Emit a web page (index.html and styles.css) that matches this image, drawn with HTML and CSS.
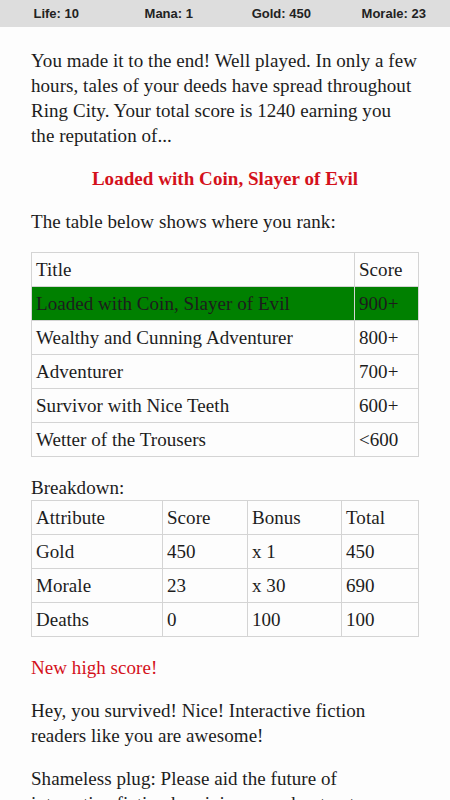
FILE: index.html
```html
<!DOCTYPE html>
<html>
<head>
<meta charset="utf-8">
<link rel="stylesheet" href="styles.css">
</head>
<body>
<div class="status">
  <div class="stat">Life: 10</div>
  <div class="stat">Mana: 1</div>
  <div class="stat">Gold: 450</div>
  <div class="stat">Morale: 23</div>
</div>
<main class="content">
  <p>You made it to the end! Well played. In only a few hours, tales of your deeds have spread throughout Ring City. Your total score is 1240 earning you the reputation of...</p>
  <p class="rank">Loaded with Coin, Slayer of Evil</p>
  <p>The table below shows where you rank:</p>
  <table class="tbl">
    <tr><td>Title</td><td class="sc">Score</td></tr>
    <tr class="hl"><td>Loaded with Coin, Slayer of Evil</td><td>900+</td></tr>
    <tr><td>Wealthy and Cunning Adventurer</td><td>800+</td></tr>
    <tr><td>Adventurer</td><td>700+</td></tr>
    <tr><td>Survivor with Nice Teeth</td><td>600+</td></tr>
    <tr><td>Wetter of the Trousers</td><td>&lt;600</td></tr>
  </table>
  <p class="label">Breakdown:</p>
  <table class="tbl breakdown">
    <tr><td class="c1">Attribute</td><td class="c2">Score</td><td class="c3">Bonus</td><td>Total</td></tr>
    <tr><td>Gold</td><td>450</td><td>x 1</td><td>450</td></tr>
    <tr><td>Morale</td><td>23</td><td>x 30</td><td>690</td></tr>
    <tr><td>Deaths</td><td>0</td><td>100</td><td>100</td></tr>
  </table>
  <p class="red">New high score!</p>
  <p>Hey, you survived! Nice! Interactive fiction readers like you are awesome!</p>
  <p>Shameless plug: Please aid the future of interactive fiction by giving us a shout out.</p>
</main>
</body>
</html>
```
FILE: styles.css
```css
html, body {
  margin: 0;
  padding: 0;
  background: #fdfdfd;
}
body {
  font-family: "Liberation Serif", serif;
  font-size: 19px;
  letter-spacing: 0.05px;
  line-height: 25px;
  color: #1c1c1c;
}
.status {
  display: grid;
  grid-template-columns: repeat(4, 1fr);
  height: 27px;
  align-items: center;
  background: #dddddd;
  font-family: "Liberation Sans", Arial, sans-serif;
  font-weight: bold;
  font-size: 13px;
  letter-spacing: 0;
  color: #222;
}
.stat {
  text-align: center;
}
.content {
  padding: 3px 31px 0 31px;
}
p {
  margin: 18px 0;
}
.rank {
  text-align: center;
  font-weight: bold;
  color: #d4111b;
}
.red {
  color: #d4111b;
}
.label {
  margin: 18px 0 0 0;
}
.tbl {
  width: 100%;
  border-collapse: collapse;
  margin: 0;
}
.tbl td {
  border: 1px solid #d4d4d4;
  padding: 4px 4px 4px 4px;
  text-align: left;
  vertical-align: middle;
}
.tbl .sc {
  width: 55px;
}
.hl td {
  background: #008000;
}
.breakdown .c1 { width: 122px; }
.breakdown .c2 { width: 76px; }
.breakdown .c3 { width: 85px; }
```
